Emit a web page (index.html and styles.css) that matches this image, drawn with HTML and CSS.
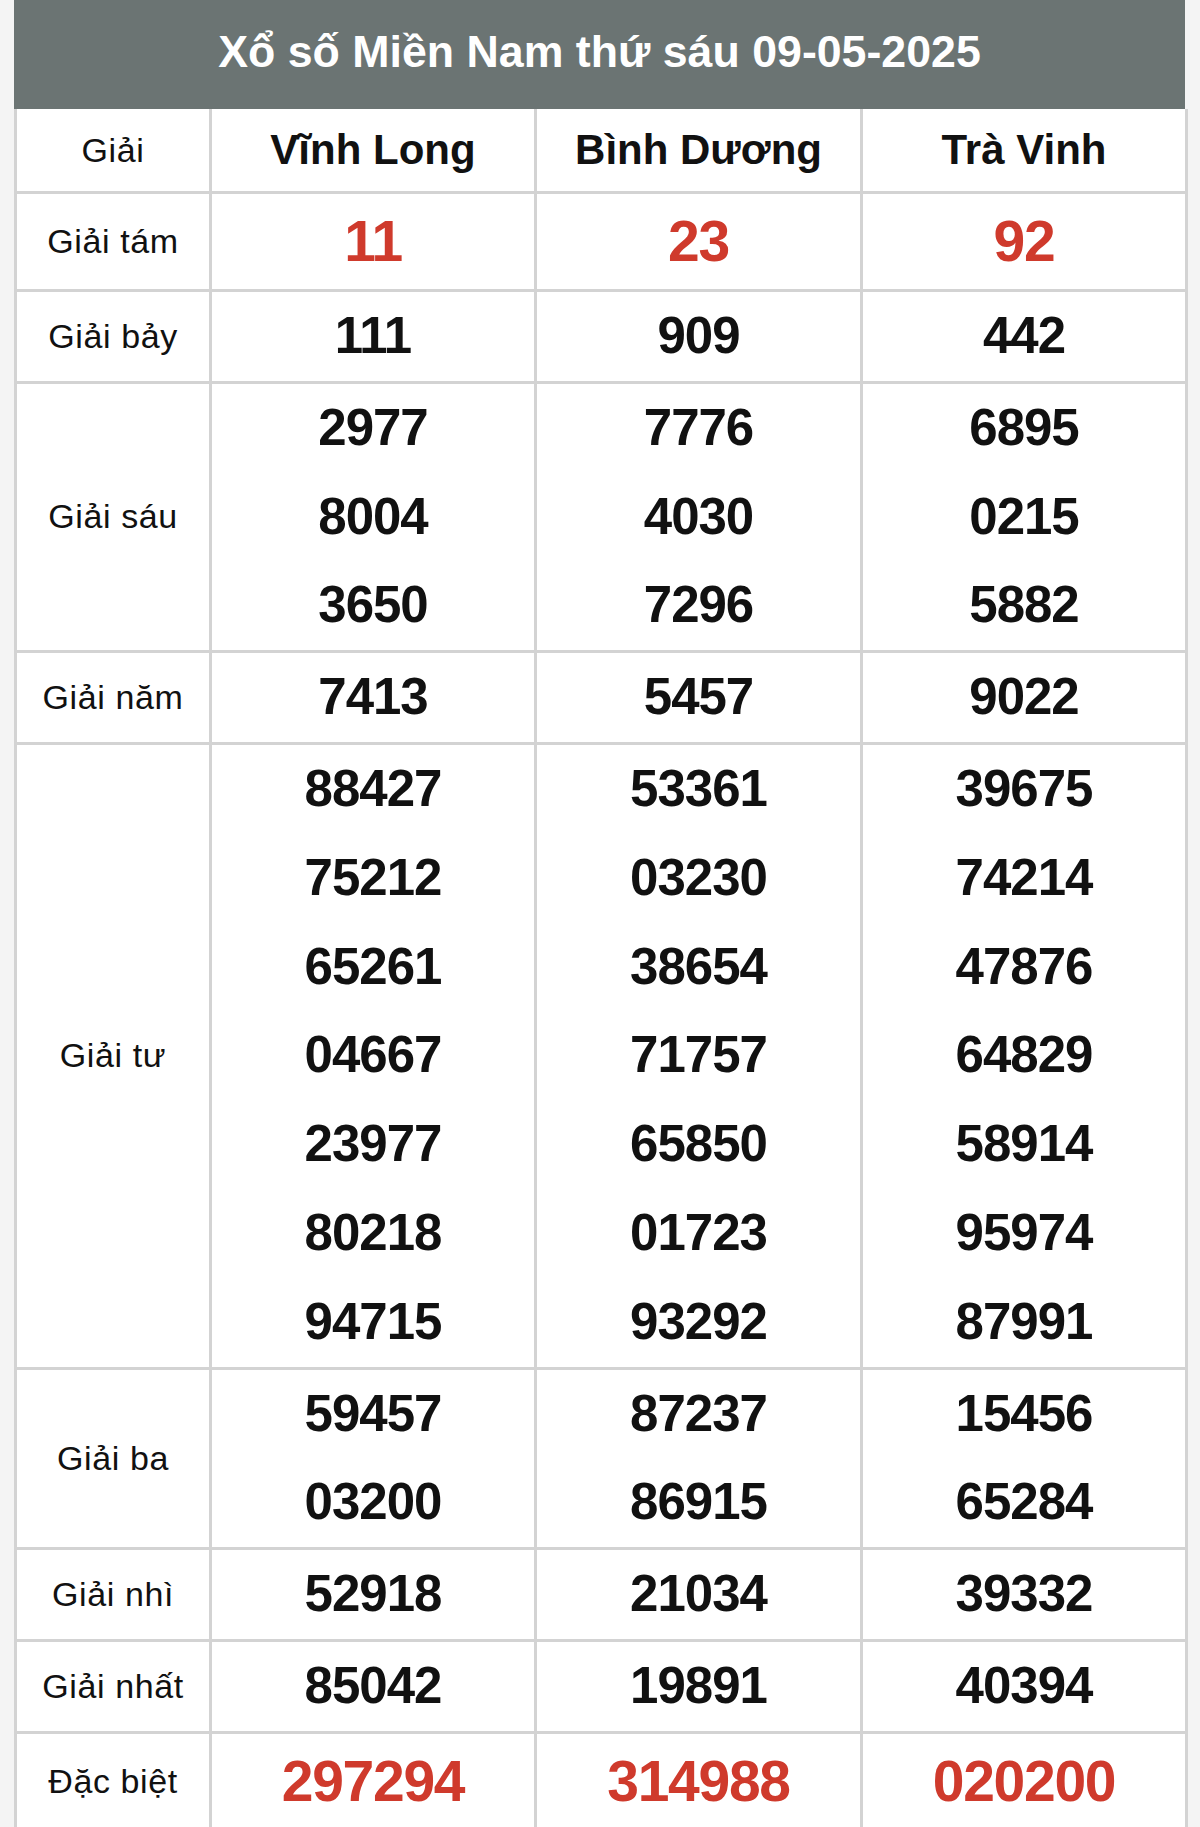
FILE: index.html
```html
<!DOCTYPE html>
<html lang="vi">
<head>
<meta charset="utf-8">
<title>Xổ số Miền Nam thứ sáu 09-05-2025</title>
<link rel="stylesheet" href="styles.css">
</head>
<body>
<div class="wrap">
  <div class="title">Xổ số Miền Nam thứ sáu 09-05-2025</div>
  <table class="kq">
    <colgroup>
      <col class="c-label">
      <col class="c-a">
      <col class="c-b">
      <col class="c-a">
    </colgroup>
    <thead>
      <tr class="head">
        <th class="label">Giải</th>
        <th>Vĩnh Long</th>
        <th>Bình Dương</th>
        <th>Trà Vinh</th>
      </tr>
    </thead>
    <tbody>
      <tr class="big">
        <td class="label">Giải tám</td>
        <td><div class="n red">11</div></td>
        <td><div class="n red">23</div></td>
        <td><div class="n red">92</div></td>
      </tr>
      <tr>
        <td class="label">Giải bảy</td>
        <td><div class="n">111</div></td>
        <td><div class="n">909</div></td>
        <td><div class="n">442</div></td>
      </tr>
      <tr>
        <td class="label">Giải sáu</td>
        <td><div class="n">2977</div><div class="n">8004</div><div class="n">3650</div></td>
        <td><div class="n">7776</div><div class="n">4030</div><div class="n">7296</div></td>
        <td><div class="n">6895</div><div class="n">0215</div><div class="n">5882</div></td>
      </tr>
      <tr>
        <td class="label">Giải năm</td>
        <td><div class="n">7413</div></td>
        <td><div class="n">5457</div></td>
        <td><div class="n">9022</div></td>
      </tr>
      <tr>
        <td class="label">Giải tư</td>
        <td><div class="n">88427</div><div class="n">75212</div><div class="n">65261</div><div class="n">04667</div><div class="n">23977</div><div class="n">80218</div><div class="n">94715</div></td>
        <td><div class="n">53361</div><div class="n">03230</div><div class="n">38654</div><div class="n">71757</div><div class="n">65850</div><div class="n">01723</div><div class="n">93292</div></td>
        <td><div class="n">39675</div><div class="n">74214</div><div class="n">47876</div><div class="n">64829</div><div class="n">58914</div><div class="n">95974</div><div class="n">87991</div></td>
      </tr>
      <tr>
        <td class="label">Giải ba</td>
        <td><div class="n">59457</div><div class="n">03200</div></td>
        <td><div class="n">87237</div><div class="n">86915</div></td>
        <td><div class="n">15456</div><div class="n">65284</div></td>
      </tr>
      <tr>
        <td class="label">Giải nhì</td>
        <td><div class="n">52918</div></td>
        <td><div class="n">21034</div></td>
        <td><div class="n">39332</div></td>
      </tr>
      <tr>
        <td class="label">Giải nhất</td>
        <td><div class="n">85042</div></td>
        <td><div class="n">19891</div></td>
        <td><div class="n">40394</div></td>
      </tr>
      <tr class="big">
        <td class="label">Đặc biệt</td>
        <td><div class="n red">297294</div></td>
        <td><div class="n red">314988</div></td>
        <td><div class="n red">020200</div></td>
      </tr>
    </tbody>
  </table>
</div>
</body>
</html>
```
FILE: styles.css
```css
html, body {
  margin: 0;
  padding: 0;
  background: #f4f4f4;
  font-family: "Liberation Sans", Arial, Helvetica, sans-serif;
  color: #111;
}

.wrap {
  width: 1171px;
  margin-left: 14px;
}

.title {
  height: 109px;
  background: #6b7473;
  color: #fff;
  font-weight: bold;
  font-size: 44.7px;
  line-height: 103px;
  text-align: center;
}

.kq {
  width: 1171px;
  border-collapse: collapse;
  table-layout: fixed;
  background: #fff;
}

.c-label { width: 195px; }
.c-a { width: 325px; }
.c-b { width: 326px; }

.kq th,
.kq td {
  border: 3px solid #d3d3d3;
  padding: 0;
  text-align: center;
  vertical-align: middle;
}

.kq thead th {
  border-top: none;
  height: 82px;
  font-size: 42px;
  font-weight: bold;
  color: #111;
}

.kq thead th.label {
  font-weight: normal;
  font-size: 34px;
}

.label {
  font-size: 34px;
  font-weight: normal;
  letter-spacing: 0.6px;
}

.n {
  height: 88.8px;
  line-height: 88.8px;
  font-size: 51px;
  font-weight: bold;
  letter-spacing: -1px;
}

.big .n {
  height: 95px;
  line-height: 95px;
  font-size: 57px;
  letter-spacing: -1.3px;
}

.red {
  color: #cf3a2c;
}
```
